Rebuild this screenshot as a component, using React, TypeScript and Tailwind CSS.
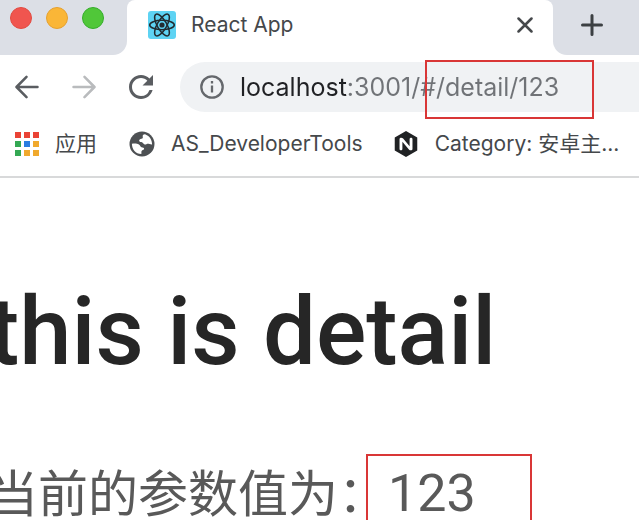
import React from "react";
import { MdRefresh } from "react-icons/md";
import { SiNginx } from "react-icons/si";

const latin = "font-['Inter','Noto_Sans_CJK_SC',sans-serif]";

const appColors = [
  "#ea4335", "#ea4335", "#ea4335",
  "#34a853", "#2a7de1", "#f0a92e",
  "#34a853", "#f0a92e", "#f0a92e",
];

function ReactLogo() {
  return (
    <svg viewBox="0 0 28 28" className="size-7 shrink-0" aria-hidden="true">
      <rect width="28" height="28" rx="3" fill="#5ed3f3" />
      <g fill="none" stroke="#222b30" strokeWidth="1.5">
        <ellipse cx="14" cy="14" rx="12.3" ry="4.7" />
        <ellipse cx="14" cy="14" rx="12.3" ry="4.7" transform="rotate(60 14 14)" />
        <ellipse cx="14" cy="14" rx="12.3" ry="4.7" transform="rotate(120 14 14)" />
      </g>
      <circle cx="14" cy="14" r="2.6" fill="#222b30" />
    </svg>
  );
}

function Arrow({ flipped = false }: { flipped?: boolean }) {
  return (
    <svg
      viewBox="0 0 24 24"
      className={flipped ? "size-6 -scale-x-100" : "size-6"}
      fill="none"
      stroke="currentColor"
      strokeWidth="2.5"
      strokeLinecap="round"
      strokeLinejoin="round"
      aria-hidden="true"
    >
      <path d="M22.5 12H1.8M11.5 1.8L1.5 12l10 10.2" />
    </svg>
  );
}

function Globe() {
  return (
    <svg viewBox="0 0 26 26" className="size-[26px] shrink-0" aria-hidden="true">
      <circle cx="13" cy="13" r="12.5" fill="#4d5053" />
      <path
        d="M16.5 3.4c-1.600-.3-2.800.5-2.800 1.600 0 1.400.5 1.900-.4 2.600-1 .7-2.700.3-3.100 1.700-.3 1.200.7 1.800 1.900 1.800 1.600 0 2 2 3.500 2.400 1.300.3 1.900-.7 3.300-.7 1.200 0 2.200.8 4.200.700.1-4.700-2.600-8.600-6.600-10.100z"
        fill="#fff"
      />
      <path
        d="M2.900 12.700c2.600-.2 5.300-.3 7 .7 1.500.9 1.300 2.300 2.600 2.800 1.400.5 2.600.2 2.600 1.500 0 1.300-1.900 1.200-2.500 2.200-.5 1 .1 1.900-.3 3.100C6.600 22.800 3 18.300 2.900 12.700z"
        fill="#fff"
      />
    </svg>
  );
}

export default function App() {
  return (
    <div className={`h-screen overflow-hidden bg-white ${latin}`}>
      <header>
        <div className="flex h-[55px] bg-white">
          <div className="flex w-[127px] shrink-0 gap-[14px] rounded-br-[14px] bg-[#dcdfe6] pt-[7px] pl-[10px]">
            <button aria-label="Close window" className="size-[22px] rounded-full border border-[#e24b41] bg-[#f0554f]" />
            <button aria-label="Minimize window" className="size-[22px] rounded-full border border-[#e6a12f] bg-[#fab637]" />
            <button aria-label="Zoom window" className="size-[22px] rounded-full border border-[#35ae2b] bg-[#50c739]" />
          </div>
          <div className="w-2/3 bg-[linear-gradient(#dcdfe6_8px,white_8px)]">
            <div className="flex h-[49px] items-center rounded-t-lg bg-white pr-5 pl-[21px]">
              <ReactLogo />
              <span className="ml-[15px] flex-1 text-[21px] leading-7 text-[#45484b]">React App</span>
              <button aria-label="Close tab" className="text-[#45484b]">
                <svg viewBox="0 0 16 16" className="size-4" fill="none" stroke="currentColor" strokeWidth="2.500" strokeLinecap="round" aria-hidden="true">
                  <path d="M1.500 1.500l13 13M14.500 1.500l-13 13" />
                </svg>
              </button>
            </div>
          </div>
          <div className="flex-1 rounded-bl-[14px] bg-[#dcdfe6] pt-[14px] pl-7">
            <button aria-label="New tab" className="block text-[#3c4043]">
              <svg viewBox="0 0 22 22" className="size-[22px]" fill="none" stroke="currentColor" strokeWidth="3" strokeLinecap="round" aria-hidden="true">
                <path d="M11 1.500v19M1.500 11h19" />
              </svg>
            </button>
          </div>
        </div>

        <div className="flex h-16 items-center pl-[15px]">
          <button aria-label="Back" className="text-[#5a5d61]"><Arrow /></button>
          <button aria-label="Forward" className="ml-[33px] text-[#b9bbbd]"><Arrow flipped /></button>
          <button aria-label="Reload" className="ml-[27px] text-[#5a5d61]"><MdRefresh size={36} /></button>
          <div className="relative ml-[21px] flex h-[50px] flex-1 items-center rounded-l-full bg-[#f0f2f4] pl-5">
            <svg viewBox="0 0 24 24" className="size-6 shrink-0" fill="none" stroke="#65686c" strokeWidth="2.300" aria-hidden="true">
              <circle cx="12" cy="12" r="10.700" />
              <path d="M12 10.500v7M12 6v2.600" />
            </svg>
            <input
              aria-label="Address"
              defaultValue="localhost:3001/#/detail/123"
              className="ml-4 h-8 min-w-0 flex-1 bg-[linear-gradient(90deg,#202124_107px,#707377_107px)] bg-clip-text text-[25px] leading-8 text-transparent outline-none"
            />
            <div className="pointer-events-none absolute -top-0.5 left-[245px] h-[59px] w-[169px] border-2 border-[#d93636]" />
          </div>
        </div>

        <nav className="flex h-[59px] items-center overflow-hidden border-b-2 border-[#d8d9da] pb-2 pl-[15px] text-[21px] leading-8 whitespace-nowrap text-[#45484b]">
          <a href="#apps" className="flex items-center gap-4">
            <svg viewBox="0 0 24 24" className="size-6 shrink-0" aria-hidden="true">
              {appColors.map((color, i) => (
                <rect key={i} x={(i % 3) * 9} y={Math.floor(i / 3) * 9} width="6" height="6" fill={color} />
              ))}
            </svg>
            应用
          </a>
          <a href="#tools" className="ml-8 flex items-center gap-4">
            <Globe />
            AS_DeveloperTools
          </a>
          <a href="#category" className="ml-[30px] flex items-center gap-4">
            <SiNginx size={26} className="shrink-0 text-[#202224]" />
            Category: 安卓主...
          </a>
        </nav>
      </header>

      <main className="pt-[94px] whitespace-nowrap">
        <h1 className="-ml-3 font-[Roboto,'Liberation_Sans',sans-serif] text-[94px] leading-[120px] font-medium text-[#262626]">
          this is detail
        </h1>
        <p className="mt-[62px] -ml-3 flex text-[50px] leading-[80px] text-[#595959]">
          当前的参数值为：
          <span className="relative font-[Roboto,'Liberation_Sans',sans-serif] text-[52px]">
            123
            <span className="absolute top-0 -left-[22px] h-[90px] w-[166px] border-2 border-[#d93636]" />
          </span>
        </p>
      </main>
    </div>
  );
}
